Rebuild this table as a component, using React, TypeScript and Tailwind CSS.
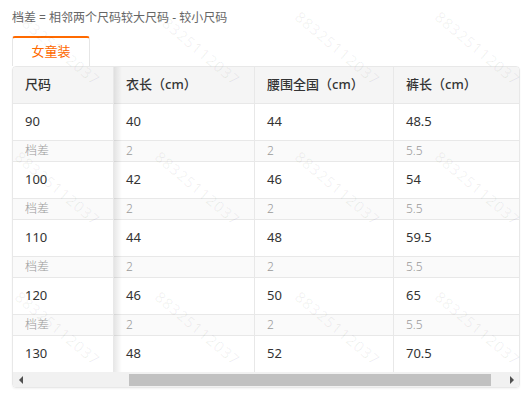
export default function App() {
  const rows = [
    { size: "90", values: ["40", "44", "48.5"] },
    { size: "100", values: ["42", "46", "54"] },
    { size: "110", values: ["44", "48", "59.5"] },
    { size: "120", values: ["46", "50", "65"] },
    { size: "130", values: ["48", "52", "70.5"] },
  ]
  const diff = ["2", "2", "5.5"]
  const marks = Array.from({ length: 12 })

  return (
    <div
      className="relative h-[403px] w-[531px] overflow-hidden bg-white px-3 pt-2"
      style={{ fontFamily: '"Noto Sans", "Noto Sans CJK SC", sans-serif' }}
    >
      <div className="text-[12px] leading-[20px] text-[#666]">档差 = 相邻两个尺码较大尺码 - 较小尺码</div>

      <div className="mt-2 flex">
        <div className="flex h-[30px] w-[78px] items-center justify-center rounded-t-[3px] border-x border-t-2 border-x-[#e6e6e6] border-t-[#ff6a00] bg-white text-[13px] text-[#ff6a00]">
          女童装
        </div>
      </div>

      <div className="relative w-[508px] overflow-hidden rounded-[4px] border border-[#e8e8e8] shadow-[0_1px_2px_rgba(0,0,0,0.05)]">
        {/* header */}
        <div className="flex h-[37px] border-b border-[#e8e8e8] bg-[#f5f5f5] text-[13px] font-medium text-[#333]">
          <div className="flex w-[101px] items-center border-r border-[#e8e8e8] px-3">尺码</div>
          <div className="flex w-[141px] items-center border-r border-[#e8e8e8] px-3">衣长（cm）</div>
          <div className="flex w-[139px] items-center border-r border-[#e8e8e8] px-3">腰围全国（cm）</div>
          <div className="flex flex-1 items-center px-3">裤长（cm）</div>
        </div>

        {rows.map((row, i) => (
          <div key={row.size}>
            <div className={`flex text-[13px] text-[#333] ${i < rows.length - 1 ? "h-[37px] border-b border-[#e8e8e8]" : "h-[36px]"}`}>
              <div className="flex w-[101px] items-center border-r border-[#e8e8e8] px-3">{row.size}</div>
              <div className="flex w-[141px] items-center border-r border-[#e8e8e8] px-3">{row.values[0]}</div>
              <div className="flex w-[139px] items-center border-r border-[#e8e8e8] px-3">{row.values[1]}</div>
              <div className="flex flex-1 items-center px-3">{row.values[2]}</div>
            </div>
            {i < rows.length - 1 && (
              <div className="flex h-[21px] border-b border-[#e8e8e8] bg-[#fafafa] text-[12px] font-light text-[#999]">
                <div className="flex w-[101px] items-center border-r border-[#e8e8e8] px-3">档差</div>
                <div className="flex w-[141px] items-center border-r border-[#e8e8e8] px-3">{diff[0]}</div>
                <div className="flex w-[139px] items-center border-r border-[#e8e8e8] px-3">{diff[1]}</div>
                <div className="flex flex-1 items-center px-3">{diff[2]}</div>
              </div>
            )}
          </div>
        ))}

        {/* horizontal scrollbar */}
        <div className="flex h-[15px] bg-[#f1f1f1]">
          <div className="flex w-[15px] items-center justify-center">
            <div className="h-0 w-0 border-y-[4px] border-r-[4px] border-y-transparent border-r-[#505050]" />
          </div>
          <div className="flex-1 pt-[2px] pb-[1px]">
            <div className="ml-[101px] h-full w-[362px] bg-[#c1c1c1]" />
          </div>
          <div className="flex w-[15px] items-center justify-center">
            <div className="h-0 w-0 border-y-[4px] border-l-[4px] border-y-transparent border-l-[#505050]" />
          </div>
        </div>

        {/* fixed column shadow */}
        <div className="pointer-events-none absolute bottom-[15px] left-[101px] top-0 w-[8px] bg-gradient-to-r from-[rgba(0,0,0,0.09)] to-transparent" />
      </div>

      {/* watermark */}
      <div className="pointer-events-none absolute left-[-12px] top-[-22px] grid grid-cols-[repeat(4,140px)] auto-rows-[140px]">
        {marks.map((_, i) => (
          <div key={i} className="flex items-center justify-center">
            <span className="rotate-[40deg] text-[15px] tracking-[1px] text-[rgba(0,0,0,0.06)]">88325112037</span>
          </div>
        ))}
      </div>
    </div>
  )
}
